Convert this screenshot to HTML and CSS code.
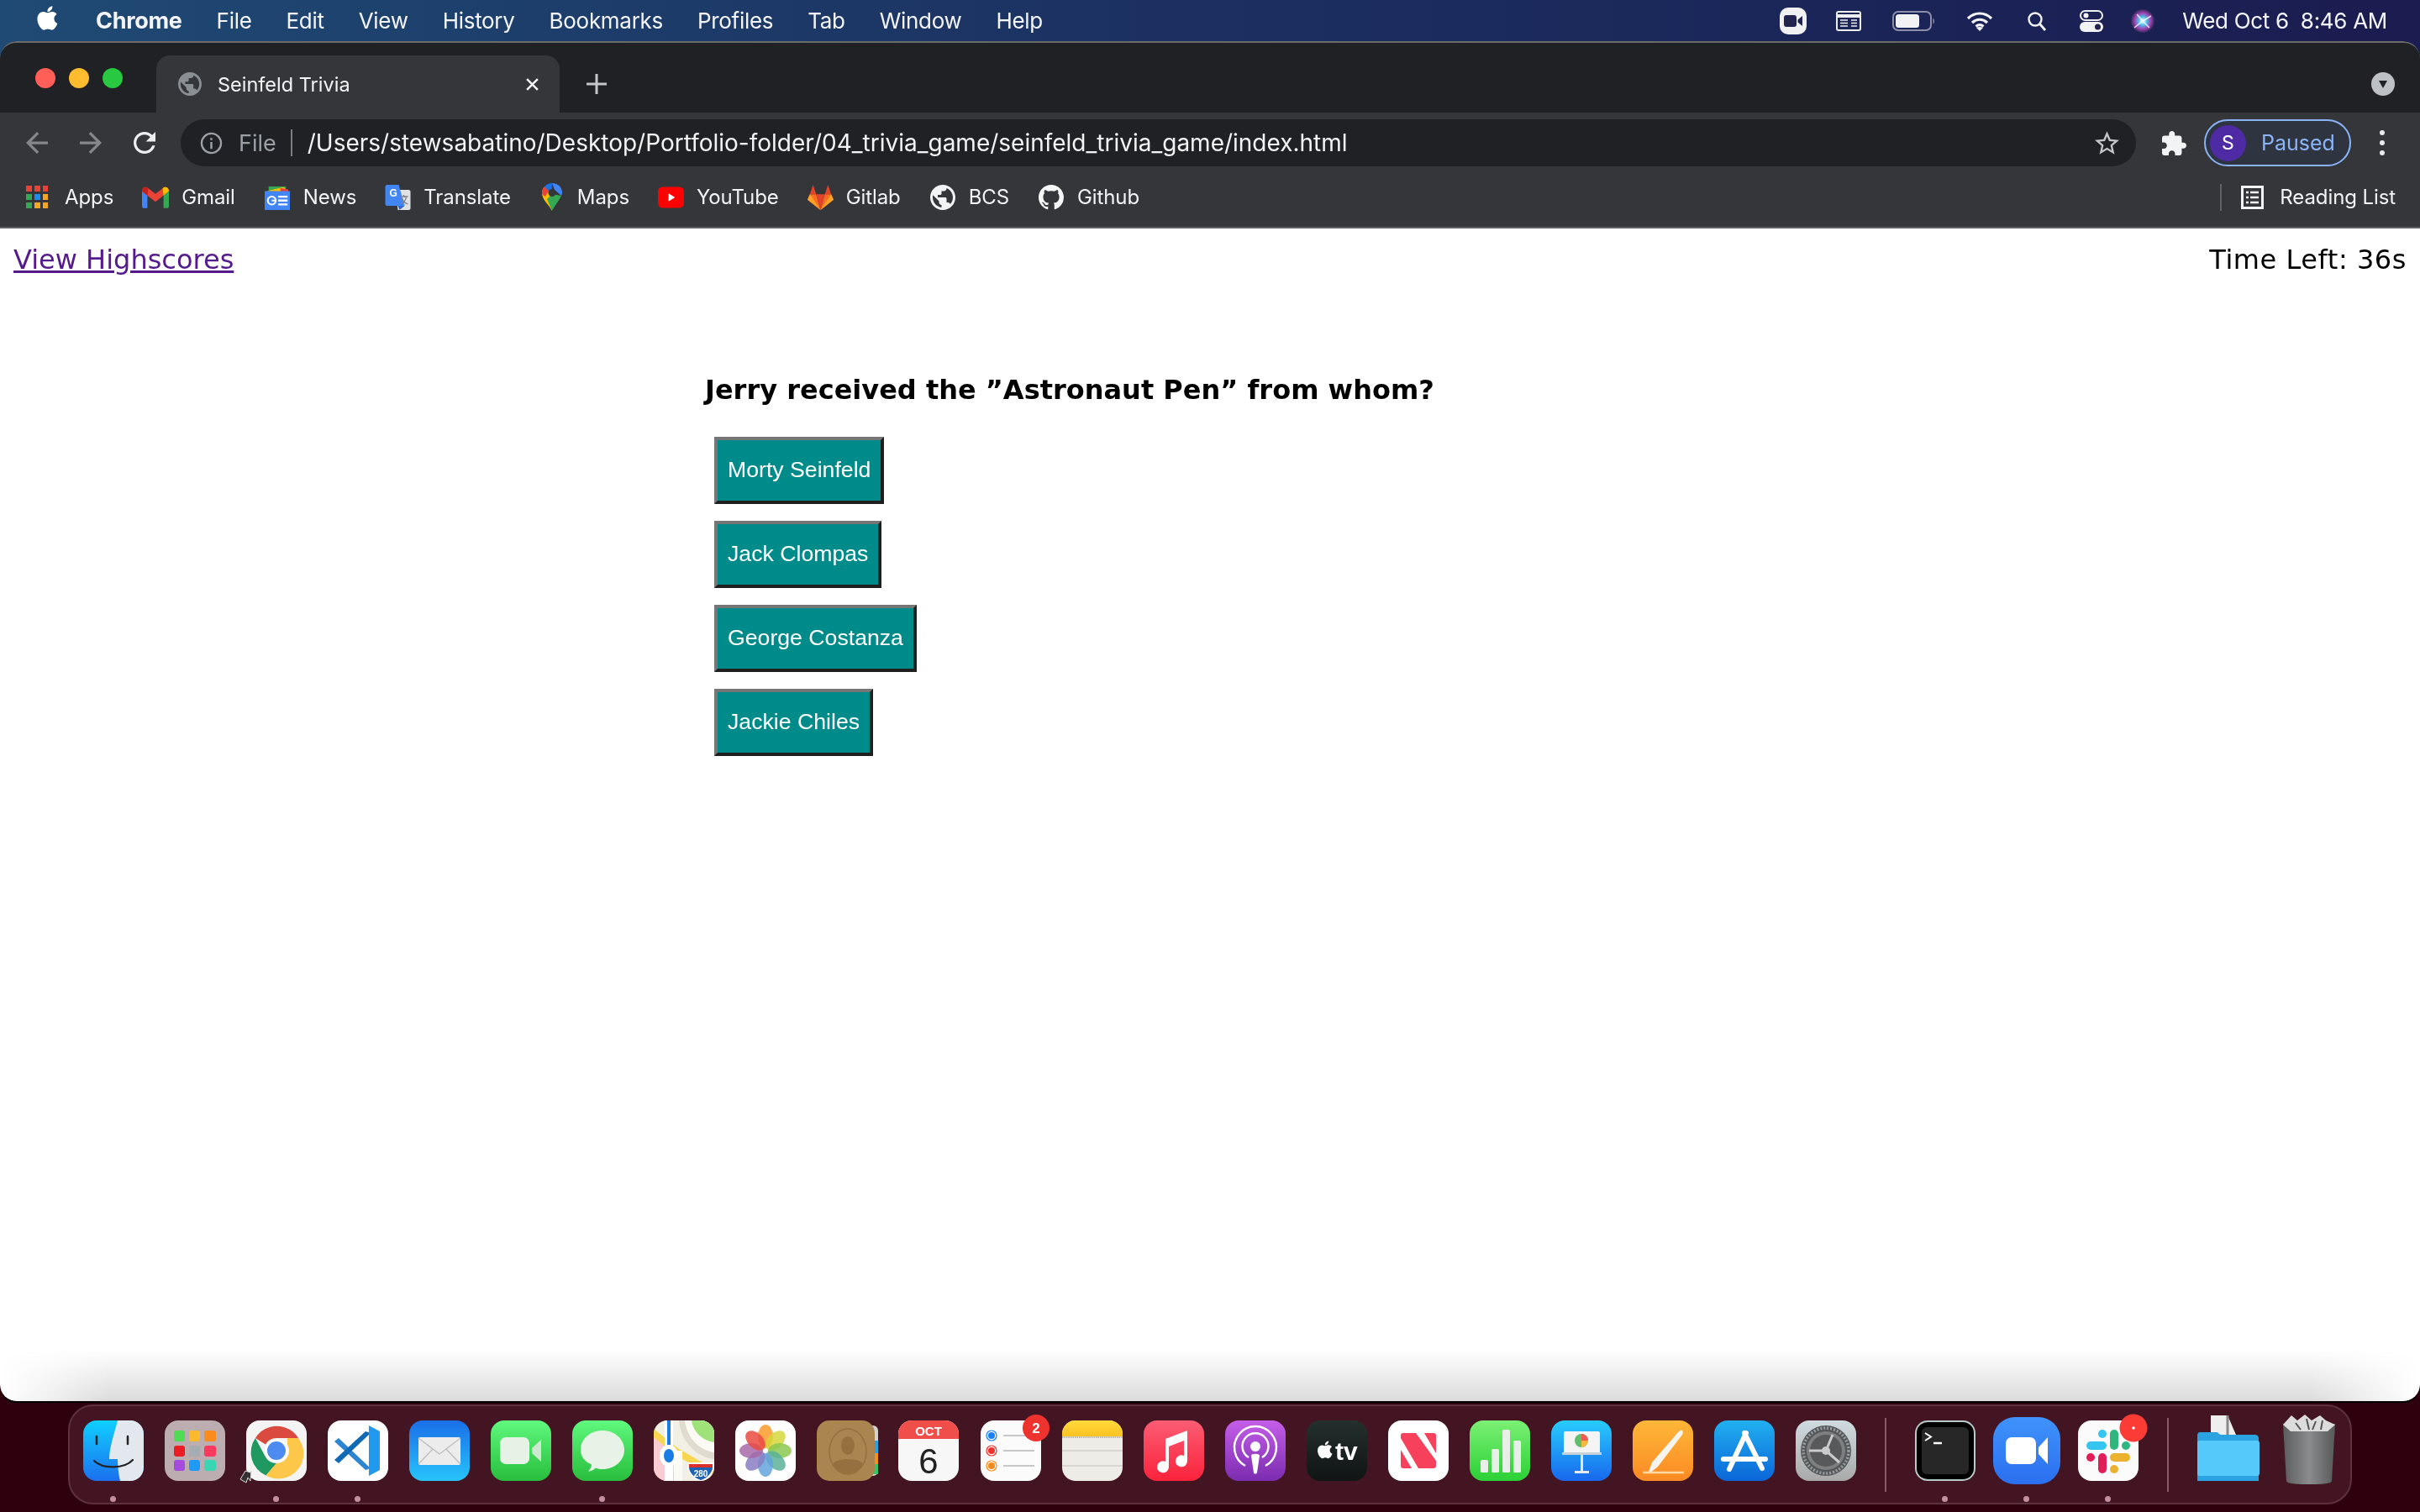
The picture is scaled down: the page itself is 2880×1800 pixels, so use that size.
FILE: index.html
```html
<!DOCTYPE html>
<html lang="en">
<head>
<meta charset="utf-8">
<title>Seinfeld Trivia</title>
<link rel="stylesheet" href="styles.css">
</head>
<body class="screen">
<header class="menubar">
  <div class="menu-left">
    <svg class="apple" viewBox="3.5 3 16.5 18" aria-hidden="true"><path fill="#fff" d="M17.05 20.28c-.98.95-2.05.8-3.08.35-1.09-.46-2.09-.48-3.24 0-1.44.62-2.2.44-3.06-.35C2.79 15.25 3.51 7.59 9.05 7.31c1.35.07 2.29.74 3.08.8 1.18-.24 2.31-.93 3.57-.84 1.51.12 2.65.72 3.4 1.8-3.12 1.87-2.38 5.98.48 7.13-.57 1.5-1.31 2.99-2.54 4.09zM12.03 7.25c-.15-2.23 1.66-4.07 3.74-4.25.29 2.58-2.34 4.5-3.74 4.25z"/></svg>
    <span class="menu-app">Chrome</span><span>File</span><span>Edit</span><span>View</span><span>History</span><span>Bookmarks</span><span>Profiles</span><span>Tab</span><span>Window</span><span>Help</span>
  </div>
  <div class="menu-right">
    <svg class="st st-zoom" viewBox="0 0 32 32"><rect width="32" height="32" rx="10" fill="#f1f1f4"/><rect x="5" y="9" width="15" height="14" rx="3" fill="#23234f"/><path d="M21.5 14.5 27 10v12l-5.500-4.500z" fill="#23234f"/></svg>
    <svg class="st st-next" viewBox="0 0 30 24"><rect x="1" y="1" width="28" height="22" rx="2" fill="none" stroke="#eee" stroke-width="2"/><path d="M1 6h28" stroke="#eee" stroke-width="4"/><path d="M5 11h9M5 14.500h9M5 18h9M18 11h7M18 14.500h7M18 18h7" stroke="#eee" stroke-width="1.600"/></svg>
    <svg class="st st-batt" viewBox="0 0 52 24"><rect x="1" y="1" width="45" height="22" rx="6" fill="none" stroke="#8d8fa8" stroke-width="2"/><rect x="4" y="4" width="28" height="16" rx="3.500" fill="#f2f2f4"/><path d="M48.500 8.500c2 1 2 6 0 7z" fill="#8d8fa8"/></svg>
    <svg class="st st-wifi" viewBox="0 0 32 24"><path d="M2 9C10 1 22 1 30 9M7 14c5.500-5 12.500-5 18 0M11.500 18.500c3-2.500 6-2.500 9 0" fill="none" stroke="#f2f2f4" stroke-width="3.200"/><path d="M16 24l-4-4c2.500-1.500 5.500-1.500 8 0z" fill="#f2f2f4"/></svg>
    <svg class="st st-search" viewBox="0 0 24 24"><circle cx="10" cy="10" r="7.500" fill="none" stroke="#f2f2f4" stroke-width="2.400"/><path d="M15.500 15.500 22 23" stroke="#f2f2f4" stroke-width="2.800"/></svg>
    <svg class="st st-ctrl" viewBox="0 0 28 26"><rect x="1" y="1" width="26" height="11" rx="5.500" fill="none" stroke="#f2f2f4" stroke-width="2"/><circle cx="7.500" cy="6.500" r="3" fill="#f2f2f4"/><rect y="14" width="28" height="12" rx="6" fill="#f2f2f4"/><circle cx="21.500" cy="20" r="3.500" fill="#23234f"/></svg>
    <svg class="st st-siri" viewBox="0 0 28 28"><defs><radialGradient id="siri"><stop offset="0" stop-color="#fff"/><stop offset=".35" stop-color="#4fc0e8"/><stop offset=".7" stop-color="#a03fb0"/><stop offset="1" stop-color="#2b2a55"/></radialGradient></defs><circle cx="14" cy="14" r="14" fill="url(#siri)"/><path d="M14 14 24 8M14 14 4 22M14 14 22 22M14 14 7 6" stroke="#fff" stroke-width="1.500" opacity=".8"/></svg>
    <span class="clock">Wed Oct 6&nbsp; 8:46 AM</span>
  </div>
</header>

<main class="window">
  <div class="tabstrip">
    <div class="lights"><i class="light red"></i><i class="light yellow"></i><i class="light green"></i></div>
    <div class="tab">
      <svg class="tab-globe" viewBox="2 2 20 20"><path fill="#8a8f94" d="M12 2C6.480 2 2 6.480 2 12s4.480 10 10 10 10-4.480 10-10S17.520 2 12 2zm-1 17.930c-3.950-.490-7-3.850-7-7.930 0-.620.080-1.210.210-1.790L9 15v1c0 1.100.900 2 2 2v1.930zm6.900-2.540c-.260-.810-1-1.390-1.900-1.390h-1v-3c0-.550-.450-1-1-1H8v-2h2c.550 0 1-.450 1-1V7h2c1.100 0 2-.900 2-2v-.410c2.930 1.190 5 4.060 5 7.410 0 2.080-.800 3.970-2.100 5.390z"/></svg>
      <span class="tab-title">Seinfeld Trivia</span>
      <svg class="tab-close" viewBox="0 0 16 16"><path d="M2 2l12 12M14 2 2 14" stroke="#f1f3f4" stroke-width="2.400"/></svg>
    </div>
    <svg class="new-tab" viewBox="0 0 24 24"><path d="M12 0v24M0 12h24" stroke="#c4c7c9" stroke-width="3"/></svg>
    <div class="strip-spacer"></div>
    <div class="tab-search"><svg viewBox="0 0 12 12"><path d="M1 2h10L6 11z" fill="#202124"/></svg></div>
  </div>

  <div class="toolbar">
    <svg class="nav nav-back" viewBox="4 4 16 16"><path fill="#85878a" d="M20 11H7.830l5.590-5.590L12 4l-8 8 8 8 1.410-1.410L7.830 13H20v-2z"/></svg>
    <svg class="nav nav-fwd" viewBox="4 4 16 16"><path fill="#85878a" d="M4 11h12.170l-5.590-5.590L12 4l8 8-8 8-1.410-1.410L16.170 13H4v-2z"/></svg>
    <svg class="nav nav-reload" viewBox="4 4 16 16"><path fill="#eceef0" d="M17.650 6.350C16.200 4.900 14.210 4 12 4c-4.420 0-7.990 3.580-7.990 8s3.570 8 7.990 8c3.730 0 6.840-2.550 7.730-6h-2.080c-.820 2.330-3.040 4-5.650 4-3.310 0-6-2.690-6-6s2.690-6 6-6c1.660 0 3.140.690 4.220 1.780L13 11h7V4l-2.350 2.350z"/></svg>
    <div class="omnibox">
      <svg class="info" viewBox="0 0 28 28"><circle cx="14" cy="14" r="12" fill="none" stroke="#9aa0a6" stroke-width="2.400"/><path d="M12.700 12.500h2.600V21h-2.600zM12.700 7.500h2.600v2.600h-2.600z" fill="#9aa0a6"/></svg>
      <span class="omni-file">File</span>
      <i class="omni-sep"></i>
      <span class="omni-url">/Users/stewsabatino/Desktop/Portfolio-folder/04_trivia_game/seinfeld_trivia_game/index.html</span>
      <svg class="star" viewBox="2 2 20 19"><path fill="#c4c7c9" d="M22 9.240l-7.190-.620L12 2 9.190 8.630 2 9.240l5.460 4.730L5.820 21 12 17.270 18.180 21l-1.630-7.030L22 9.240zM12 15.400l-3.760 2.270 1-4.280-3.320-2.880 4.380-.380L12 6.100l1.710 4.040 4.380.380-3.320 2.880 1 4.280L12 15.400z"/></svg>
    </div>
    <svg class="puzzle" viewBox="2 1 21 21"><path fill="#f1f3f4" d="M20.500 11H19V7c0-1.100-.900-2-2-2h-4V3.500C13 2.120 11.880 1 10.500 1S8 2.120 8 3.500V5H4c-1.100 0-1.990.900-1.990 2v3.800H3.500c1.490 0 2.700 1.210 2.700 2.700s-1.210 2.700-2.700 2.700H2V20c0 1.100.900 2 2 2h3.800v-1.500c0-1.490 1.210-2.700 2.700-2.700 1.490 0 2.700 1.210 2.700 2.700V22H17c1.100 0 2-.900 2-2v-4h1.500c1.380 0 2.500-1.120 2.500-2.500S21.880 11 20.500 11z"/></svg>
    <div class="profile"><span class="avatar">S</span><span class="paused">Paused</span></div>
    <div class="kebab"><i></i><i></i><i></i></div>
  </div>

  <nav class="bookmarks">
    <a class="bm bm-apps"><svg class="bm-ic" viewBox="0 0 26 27"><g fill="#ea4335"><rect width="7" height="7"/><rect x="10" width="7" height="7"/><rect x="20" width="6" height="7"/></g><rect y="10" width="7" height="7" fill="#34a853"/><rect x="10" y="10" width="7" height="7" fill="#1a8cf0"/><rect x="20" y="10" width="6" height="7" fill="#f5a623"/><rect y="20" width="7" height="7" fill="#34a853"/><rect x="10" y="20" width="7" height="7" fill="#f5a623"/><rect x="20" y="20" width="6" height="7" fill="#f5a623"/></svg><span>Apps</span></a>
    <a class="bm"><svg class="bm-ic" viewBox="0 0 30 24"><path d="M0 5v17c0 1 1 2 2 2h4V10z" fill="#4285f4"/><path d="M24 10v14h4c1 0 2-1 2-2V5z" fill="#34a853"/><path d="M0 5c0-4 4-6 7-3l8 6 8-6c3-3 7-1 7 3l-6 5-9 7-9-7z" fill="#ea4335"/><path d="M0 5c0-4 4-6 7-3l-1 8z" fill="#c5221f"/><path d="M30 5c0-4-4-6-7-3l1 8z" fill="#fbbc04"/></svg><span>Gmail</span></a>
    <a class="bm"><svg class="bm-ic" viewBox="0 0 32 32"><path d="M5 2h22v6H5z" fill="#34a853"/><path d="M2 8 24 3l6 6z" fill="#fbbc04"/><path d="M20 4l10 2v4H20z" fill="#ea4335"/><rect y="8" width="32" height="24" fill="#4285f4"/><circle cx="9" cy="20" r="5" fill="none" stroke="#fff" stroke-width="2.200"/><path d="M9 20h5" stroke="#fff" stroke-width="2"/><path d="M17 15h12M17 20h12M17 25h12" stroke="#fff" stroke-width="2.500"/></svg><span>News</span></a>
    <a class="bm bm-tight"><svg class="bm-ic" viewBox="0 0 30 30"><path d="M12 6h16c1 0 2 1 2 2v20c0 1-1 2-2 2H15z" fill="#dfe1e3"/><path d="M2 0h14l7 25H2c-1 0-2-1-2-2V2c0-1 1-2 2-2z" fill="#4285f4"/><path d="M15 25h8l-6 5z" fill="#3367d6"/><text class="tr-g" x="5" y="14">G</text><path d="M18 14h9M22 12v2M25 14c-1 6-4 8-6 9M20 16c1 4 4 6 7 7" fill="none" stroke="#7d8084" stroke-width="1.300"/></svg><span>Translate</span></a>
    <a class="bm bm-narrow"><svg class="bm-ic bm-pin" viewBox="0 0 24 33"><path d="M12 33C8 25 0 20 0 11.500 0 9 1 6.500 3 4.500l9 9z" fill="#fbbc04"/><path d="M12 33c1-3 9-13 11-18L12 13 6 19z" fill="#34a853"/><path d="M3 4.500C5 1.500 8 0 12 0l-.500 9-3 2z" fill="#1a73e8"/><path d="M0 11.500C0 9 1 6.500 3 4.500L8 9 4 16C1 14 0 13 0 11.500z" fill="#ea4335"/><path d="M12 0c7 0 12 5 12 11.500 0 1-.500 2.500-1 3.500L15 8z" fill="#4285f4"/><circle cx="12" cy="11.500" r="4.500" fill="#35363a"/></svg><span>Maps</span></a>
    <a class="bm bm-tight"><svg class="bm-ic" viewBox="0 0 32 26"><rect width="32" height="26" rx="6" fill="#f00"/><path d="M13 8v10l8-5z" fill="#fff"/></svg><span>YouTube</span></a>
    <a class="bm bm-tight"><svg class="bm-ic" viewBox="0 0 33 32"><path d="M16.500 32 0 19l3-7h8z" fill="#fc6d26"/><path d="M16.500 32 33 19l-3-7h-8z" fill="#fc6d26"/><path d="M16.500 32 11 12h11z" fill="#e24329"/><path d="M0 19l16.500 13L3 12z" fill="#fca326"/><path d="M33 19 16.500 32 30 12z" fill="#fca326"/><path d="M3 12 7 0l4 12zM22 12l4-12 4 12z" fill="#e24329"/></svg><span>Gitlab</span></a>
    <a class="bm"><svg class="bm-ic bm-globe" viewBox="2 2 20 20"><path fill="#f1f3f4" d="M12 2C6.480 2 2 6.480 2 12s4.480 10 10 10 10-4.480 10-10S17.520 2 12 2zm-1 17.930c-3.950-.490-7-3.850-7-7.930 0-.620.080-1.210.210-1.790L9 15v1c0 1.100.900 2 2 2v1.930zm6.900-2.540c-.260-.810-1-1.390-1.900-1.390h-1v-3c0-.550-.450-1-1-1H8v-2h2c.550 0 1-.450 1-1V7h2c1.100 0 2-.900 2-2v-.410c2.930 1.190 5 4.060 5 7.410 0 2.080-.800 3.970-2.100 5.390z"/></svg><span>BCS</span></a>
    <a class="bm"><svg class="bm-ic" viewBox="0 0 16 16"><path fill="#f5f5f5" d="M8 0C3.580 0 0 3.580 0 8c0 3.540 2.290 6.530 5.470 7.590.4.070.55-.17.55-.38 0-.19-.01-.82-.01-1.490-2.010.37-2.530-.49-2.690-.94-.09-.23-.48-.94-.82-1.130-.28-.15-.68-.52-.01-.53.63-.01 1.080.58 1.230.82.72 1.210 1.870.87 2.330.66.07-.52.28-.87.51-1.070-1.780-.2-3.640-.89-3.640-3.950 0-.87.31-1.590.82-2.150-.08-.2-.36-1.020.08-2.120 0 0 .67-.21 2.200.82.64-.18 1.320-.27 2-.27.68 0 1.360.09 2 .27 1.530-1.040 2.200-.82 2.200-.82.44 1.100.16 1.920.08 2.120.51.56.82 1.270.82 2.150 0 3.070-1.870 3.750-3.650 3.950.29.25.54.73.54 1.480 0 1.070-.01 1.930-.01 2.200 0 .21.15.46.55.38A8.013 8.013 0 0016 8c0-4.420-3.580-8-8-8z"/></svg><span>Github</span></a>
    <div class="bm-spacer"></div>
    <i class="bm-sep"></i>
    <a class="bm bm-read"><svg class="read-ic" viewBox="0 0 27 28"><rect x="1.500" y="1.500" width="24" height="25" fill="none" stroke="#f1f3f4" stroke-width="3"/><path d="M6 8h3M6 14h3M6 20h3M11 8h10M11 14h10M11 20h10" stroke="#f1f3f4" stroke-width="2.400"/></svg><span>Reading List</span></a>
  </nav>

  <section class="page">
    <div class="topline">
      <a class="scores" href="#">View Highscores</a>
      <span class="timer">Time Left: 36s</span>
    </div>
    <div class="quiz">
      <h3 class="question">Jerry received the ”Astronaut Pen” from whom?</h3>
      <div class="answers">
        <button class="answer">Morty Seinfeld</button>
        <button class="answer">Jack Clompas</button>
        <button class="answer">George Costanza</button>
        <button class="answer">Jackie Chiles</button>
      </div>
    </div>
  </section>
</main>

<footer class="dock-row">
<div class="dock">
  <div class="cell"><svg class="di" viewBox="0 0 72 72"><defs><linearGradient id="fb" x1="0" y1="0" x2="0" y2="1"><stop offset="0" stop-color="#0fd0ff"/><stop offset="1" stop-color="#1b70ee"/></linearGradient></defs><rect width="72" height="72" rx="16" fill="url(#fb)"/><path d="M41 0h15c9 0 16 7 16 16v40c0 9-7 16-16 16H44c-2-8-3-18-3-26H31c0-14 6-30 10-46z" fill="#e3e8ee"/><path d="M16 19v9M53 19v9" stroke="#222" stroke-width="2.500" stroke-linecap="round"/><path d="M13 48c10 10 36 10 46-1" fill="none" stroke="#222" stroke-width="2.200" stroke-linecap="round"/></svg><i class="dot"></i></div>
  <div class="cell"><svg class="di" viewBox="0 0 72 72"><rect width="72" height="72" rx="16" fill="#bcaeb0"/><rect x="11" y="12" width="13" height="13" rx="3" fill="#4fdc52"/><rect x="29" y="12" width="13" height="13" rx="3" fill="#fdb92c"/><rect x="47" y="12" width="14" height="13" rx="3" fill="#fa8c1c"/><rect x="11" y="30" width="13" height="13" rx="3" fill="#ec1c24"/><rect x="29" y="30" width="13" height="13" rx="3" fill="#a5acb2"/><rect x="47" y="30" width="14" height="13" rx="3" fill="#fb3a5e"/><rect x="11" y="47" width="13" height="13" rx="3" fill="#a54be0"/><rect x="29" y="47" width="13" height="13" rx="3" fill="#1e9bf8"/><rect x="47" y="47" width="14" height="13" rx="3" fill="#3ad6b4"/></svg></div>
  <div class="cell"><svg class="di" viewBox="0 0 72 72"><rect width="72" height="72" rx="16" fill="#f4f4f4"/><path d="M10.900 21A30 30 0 0 1 62 21H36a15 15 0 0 0-13 7.500z" fill="#db4a3f"/><path d="M10.900 21 23 43.500A15 15 0 0 0 36 51L23.500 65.500A30 30 0 0 1 10.900 21z" fill="#1f9960"/><path d="M62 21A30 30 0 0 1 23.500 65.500L36 51a15 15 0 0 0 13-22.500V21z" fill="#fdc84a"/><circle cx="36" cy="36" r="14" fill="#fff"/><circle cx="36" cy="36" r="11" fill="#4d8bf0"/><path d="M-7 70l6-10 6 2 1-2-1 12-3-4-2 6z" fill="#333" stroke="#ddd" stroke-width="1"/></svg><i class="dot"></i></div>
  <div class="cell"><svg class="di" viewBox="0 0 72 72"><rect width="72" height="72" rx="16" fill="#fff"/><path d="M8 25l5-4 38 36-6 2z" fill="#2c85d0"/><path d="M8 47l5 4 38-36-6-2z" fill="#0f69b4"/><path d="M49 6 62 13v46l-13 7z" fill="#2099ef"/></svg><i class="dot"></i></div>
  <div class="cell"><svg class="di" viewBox="0 0 72 72"><defs><linearGradient id="mb" x1="0" y1="0" x2="0" y2="1"><stop offset="0" stop-color="#1a6fe8"/><stop offset="1" stop-color="#27c4fb"/></linearGradient></defs><rect width="72" height="72" rx="16" fill="url(#mb)"/><rect x="11" y="20" width="50" height="33" rx="2" fill="#ececec"/><path d="M11 21 36 40 61 21M11 52 28 34M61 52 44 34" fill="none" stroke="#bdbdbd" stroke-width="1.300"/></svg></div>
  <div class="cell"><svg class="di" viewBox="0 0 72 72"><defs><linearGradient id="fc" x1="0" y1="0" x2="0" y2="1"><stop offset="0" stop-color="#5ff97e"/><stop offset="1" stop-color="#28bd3c"/></linearGradient></defs><rect width="72" height="72" rx="16" fill="url(#fc)"/><rect x="11" y="20" width="35" height="32" rx="7" fill="#e6f2e6"/><path d="M49 33 60 23v26L49 39z" fill="#cfe6d0"/></svg></div>
  <div class="cell"><svg class="di" viewBox="0 0 72 72"><rect width="72" height="72" rx="16" fill="url(#fc)"/><path d="M36 12c14.500 0 26 10 26 23S50.500 58 36 58c-3 0-5.500-.500-8-1.500-2 2-5 4-9 4 2-2 4-5 4-8C15 49 10 43 10 35c0-13 11.500-23 26-23z" fill="#e8f3e8"/></svg><i class="dot"></i></div>
  <div class="cell"><svg class="di" viewBox="0 0 72 72"><defs><clipPath id="mc"><rect width="72" height="72" rx="16"/></clipPath></defs><g clip-path="url(#mc)"><rect width="72" height="72" fill="#f2efe4"/><path d="M30 0H72V46C50 44 32 24 30 0z" fill="#dfdbcf"/><path d="M37 0H72V38C54 36 39 20 37 0z" fill="#fbfaf5"/><path d="M45 0H72V26C58 24 47 14 45 0z" fill="#9fe27a"/><path d="M0 14 26 36V72H0z" fill="#f9ccd3"/><path d="M0 10 30 34 72 58V66L30 44 0 20z" fill="#f8d64e"/><rect x="24" y="36" width="10" height="36" fill="#fbfaf5"/><rect x="13" y="0" width="10" height="72" fill="#fff"/><rect x="16" y="0" width="4" height="35" fill="#1a7de4"/><ellipse cx="18" cy="42" rx="11" ry="13" fill="#fff"/><ellipse cx="18" cy="42" rx="6" ry="8" fill="#1a7de4"/><path d="M40 50h32v4c0 8-8 16-16 18-8-2-16-10-16-18z" fill="#fff"/><path d="M42 52h28v4H42z" fill="#d9302a"/><path d="M42 56h28c0 6-7 13-14 15-7-2-14-9-14-15z" fill="#1d62b4"/><text class="mp-280" x="56" y="67">280</text></g></svg></div>
  <div class="cell"><svg class="di" viewBox="0 0 72 72"><rect width="72" height="72" rx="16" fill="#fff"/><g style="mix-blend-mode:multiply"><ellipse cx="36" cy="19" rx="9" ry="14" fill="#fc9a2c" opacity=".85"/><ellipse cx="36" cy="19" rx="9" ry="14" fill="#d6d73c" opacity=".85" transform="rotate(45 36 36)"/><ellipse cx="36" cy="19" rx="9" ry="14" fill="#8cc850" opacity=".85" transform="rotate(90 36 36)"/><ellipse cx="36" cy="19" rx="9" ry="14" fill="#5bb29a" opacity=".85" transform="rotate(135 36 36)"/><ellipse cx="36" cy="19" rx="9" ry="14" fill="#63a5dc" opacity=".85" transform="rotate(180 36 36)"/><ellipse cx="36" cy="19" rx="9" ry="14" fill="#8a7fc4" opacity=".85" transform="rotate(225 36 36)"/><ellipse cx="36" cy="19" rx="9" ry="14" fill="#a76aa8" opacity=".85" transform="rotate(270 36 36)"/><ellipse cx="36" cy="19" rx="9" ry="14" fill="#ea4b42" opacity=".85" transform="rotate(315 36 36)"/></g></svg></div>
  <div class="cell"><svg class="di" viewBox="0 0 72 72"><rect x="60" y="6" width="13" height="60" rx="6" fill="#d2d2d2"/><rect x="66" y="24" width="7" height="15" fill="#2aa3e6"/><rect x="66" y="39" width="7" height="13" fill="#f58f1e"/><rect x="66" y="52" width="7" height="12" fill="#35c566"/><rect width="69" height="72" rx="15" fill="#ab8550"/><ellipse cx="37" cy="37" rx="22" ry="27" fill="none" stroke="#95713f" stroke-width="1.500"/><ellipse cx="37" cy="30" rx="8" ry="11" fill="#95713f"/><path d="M19 52c4-8 32-8 36 0-5 8-12 12-18 12S24 60 19 52z" fill="#95713f"/></svg></div>
  <div class="cell"><svg class="di" viewBox="0 0 72 72"><defs><clipPath id="cc"><rect width="72" height="72" rx="16"/></clipPath></defs><g clip-path="url(#cc)"><rect width="72" height="72" fill="#f7f7f7"/><rect width="72" height="22" fill="#f04e4a"/></g><text class="cal-mon" x="36" y="18">OCT</text><text class="cal-day" x="36" y="63">6</text></svg></div>
  <div class="cell"><svg class="di" viewBox="0 0 72 72"><rect width="72" height="72" rx="16" fill="#fbfbfb"/><circle cx="13" cy="18" r="6" fill="none" stroke="#1a7ff0" stroke-width="1.200"/><circle cx="13" cy="18" r="4" fill="#1a7ff0"/><circle cx="13" cy="36" r="6" fill="none" stroke="#f0322a" stroke-width="1.200"/><circle cx="13" cy="36" r="4" fill="#f0322a"/><circle cx="13" cy="54" r="6" fill="none" stroke="#f58a1a" stroke-width="1.200"/><circle cx="13" cy="54" r="4" fill="#f58a1a"/><path d="M27 18h37M27 36h37M27 54h37" stroke="#c8c8c8" stroke-width="2"/><circle cx="66" cy="9" r="16" fill="#ee332e"/><text class="badge-num" x="66" y="15">2</text></svg></div>
  <div class="cell"><svg class="di" viewBox="0 0 72 72"><defs><clipPath id="nc"><rect width="72" height="72" rx="16"/></clipPath><linearGradient id="ny" x1="0" y1="0" x2="0" y2="1"><stop offset="0" stop-color="#ffd93a"/><stop offset="1" stop-color="#fdc223"/></linearGradient></defs><g clip-path="url(#nc)"><rect width="72" height="72" fill="#eeece6"/><rect width="72" height="19" fill="url(#ny)"/><path d="M0 20h72" stroke="#b9b6ab" stroke-width="2" stroke-dasharray="1.500 1"/><path d="M0 36h72M0 54h72" stroke="#d2d0c9" stroke-width="1.500"/></g></svg></div>
  <div class="cell"><svg class="di" viewBox="0 0 72 72"><defs><linearGradient id="mu" x1="0" y1="0" x2="0" y2="1"><stop offset="0" stop-color="#fb5c74"/><stop offset="1" stop-color="#fa233b"/></linearGradient></defs><rect width="72" height="72" rx="16" fill="url(#mu)"/><path d="M26 22 52 12v36a7 7 0 1 1-4-6V24l-18 7v24a7 7 0 1 1-4-6z" fill="#fff"/></svg></div>
  <div class="cell"><svg class="di" viewBox="0 0 72 72"><defs><linearGradient id="po" x1="0" y1="0" x2="0" y2="1"><stop offset="0" stop-color="#c55ee8"/><stop offset="1" stop-color="#7b2cb0"/></linearGradient></defs><rect width="72" height="72" rx="16" fill="url(#po)"/><path d="M24 54a25 25 0 1 1 24 0M28 44a15.500 15.500 0 1 1 16 0" fill="none" stroke="#fff" stroke-width="2.400"/><circle cx="36" cy="31" r="6" fill="#fff"/><path d="M31 42c0-3 10-3 10 0l-3 20c-.500 2-3.500 2-4 0z" fill="#fff"/></svg></div>
  <div class="cell"><svg class="di" viewBox="0 0 72 72"><defs><linearGradient id="tv" x1="0" y1="0" x2="0" y2="1"><stop offset="0" stop-color="#24302e"/><stop offset="1" stop-color="#101414"/></linearGradient></defs><rect width="72" height="72" rx="16" fill="url(#tv)"/><g transform="translate(8 21) scale(1.150)"><path fill="#fff" d="M17.050 20.280c-.980.950-2.050.800-3.080.350-1.090-.460-2.090-.480-3.240 0-1.440.620-2.200.440-3.060-.350C2.790 15.250 3.510 7.590 9.050 7.310c1.350.070 2.290.740 3.080.800 1.180-.240 2.310-.930 3.570-.840 1.510.120 2.650.720 3.400 1.800-3.120 1.870-2.380 5.980.480 7.130-.570 1.500-1.310 2.990-2.540 4.090zM12.030 7.250c-.150-2.230 1.660-4.070 3.740-4.250.290 2.580-2.340 4.500-3.740 4.250z"/></g><text class="tv-txt" x="34" y="47">tv</text></svg></div>
  <div class="cell"><svg class="di" viewBox="0 0 72 72"><rect width="72" height="72" rx="16" fill="#fff"/><rect x="15" y="15" width="42" height="42" rx="3" fill="#f7405c"/><path d="M15 21 36 57H28L15 35zM33 15h10l14 24v9z" fill="#fff"/></svg></div>
  <div class="cell"><svg class="di" viewBox="0 0 72 72"><defs><linearGradient id="nu" x1="0" y1="0" x2="0" y2="1"><stop offset="0" stop-color="#7bf074"/><stop offset="1" stop-color="#2bd036"/></linearGradient></defs><rect width="72" height="72" rx="16" fill="url(#nu)"/><rect x="13" y="47" width="9" height="15" rx="1.500" fill="#e8efe8"/><rect x="26" y="34" width="9" height="28" rx="1.500" fill="#e8efe8"/><rect x="39" y="11" width="9" height="51" rx="1.500" fill="#e8efe8"/><rect x="52" y="24" width="9" height="38" rx="1.500" fill="#e8efe8"/></svg></div>
  <div class="cell"><svg class="di" viewBox="0 0 72 72"><defs><linearGradient id="ke" x1="0" y1="0" x2="0" y2="1"><stop offset="0" stop-color="#27ccfc"/><stop offset="1" stop-color="#1868ee"/></linearGradient></defs><rect width="72" height="72" rx="16" fill="url(#ke)"/><rect x="15" y="13" width="43" height="28" rx="2" fill="#f4f4f4"/><circle cx="36" cy="24" r="8" fill="#62bd6c"/><path d="M36 24V16a8 8 0 0 1 8 8z" fill="#ef5b4e"/><path d="M36 24h8a8 8 0 0 1-8 8z" fill="#f5b93d"/><rect x="13" y="38" width="47" height="3" fill="#c8d0d8"/><path d="M35 41h3v19h-3z" fill="#e6eaee"/><path d="M28 60h17v3H28z" fill="#e6eaee"/></svg></div>
  <div class="cell"><svg class="di" viewBox="0 0 72 72"><defs><linearGradient id="pa" x1="0" y1="0" x2="0" y2="1"><stop offset="0" stop-color="#fdb738"/><stop offset="1" stop-color="#fb8a24"/></linearGradient></defs><rect width="72" height="72" rx="16" fill="url(#pa)"/><path d="M55 13c4-3 6 0 4 4L30 55l-10 8-1-2 4-11z" fill="#f7f4ee"/><path d="M12 62h49" stroke="#ffd9a0" stroke-width="2.500"/></svg></div>
  <div class="cell"><svg class="di" viewBox="0 0 72 72"><defs><linearGradient id="ap" x1="0" y1="0" x2="0" y2="1"><stop offset="0" stop-color="#21b0f0"/><stop offset="1" stop-color="#0b66d8"/></linearGradient></defs><rect width="72" height="72" rx="16" fill="url(#ap)"/><path d="M38 15 18 58M36 15 57 57M11 46h50" stroke="#fff" stroke-width="6" stroke-linecap="round"/></svg></div>
  <div class="cell"><svg class="di" viewBox="0 0 72 72"><defs><linearGradient id="se" x1="0" y1="0" x2="0" y2="1"><stop offset="0" stop-color="#cfdbe0"/><stop offset="1" stop-color="#a9a9a9"/></linearGradient></defs><rect width="72" height="72" rx="16" fill="url(#se)"/><circle cx="36" cy="36" r="30" fill="#55585a"/><circle cx="36" cy="36" r="27" fill="none" stroke="#9a9d9f" stroke-width="3.500" stroke-dasharray="2 2"/><circle cx="36" cy="36" r="23" fill="#7d7f81"/><circle cx="36" cy="36" r="19" fill="#58595b"/><path d="M36 36 44 17M36 36 16 36M36 36 52 50" stroke="#c9cbcc" stroke-width="3"/><circle cx="36" cy="36" r="5" fill="#c9cbcc"/></svg></div>
  <i class="dock-sep"></i>
  <div class="cell"><svg class="di" viewBox="0 0 72 72"><rect width="72" height="72" rx="15" fill="#b8c9c9"/><rect x="2" y="2" width="68" height="68" rx="13" fill="#000"/><rect x="8" y="8" width="56" height="56" rx="6" fill="#272727"/><path d="M12 15l7 4.500L12 24" fill="none" stroke="#fff" stroke-width="2"/><path d="M22 27h10" stroke="#fff" stroke-width="2.500"/></svg><i class="dot"></i></div>
  <div class="cell"><svg class="di" viewBox="0 0 72 72"><defs><linearGradient id="zo" x1="0" y1="0" x2="0" y2="1"><stop offset="0" stop-color="#3f93fb"/><stop offset="1" stop-color="#2b6ff0"/></linearGradient></defs><rect x="-4" y="-4" width="80" height="80" rx="26" fill="url(#zo)"/><rect x="11" y="20" width="36" height="32" rx="7" fill="#fff"/><path d="M50 32 61 20v32L50 40z" fill="#fff"/></svg><i class="dot"></i></div>
  <div class="cell"><svg class="di" viewBox="0 0 72 72"><rect width="72" height="72" rx="16" fill="#fbfbfb"/><rect x="10" y="25" width="24" height="10" rx="5" fill="#36c5f0"/><rect x="24" y="11" width="10" height="10" rx="5" fill="#36c5f0"/><rect x="38" y="11" width="10" height="24" rx="5" fill="#2eb67d"/><rect x="52" y="25" width="10" height="10" rx="5" fill="#2eb67d"/><rect x="38" y="39" width="24" height="10" rx="5" fill="#ecb22e"/><rect x="38" y="53" width="10" height="10" rx="5" fill="#ecb22e"/><rect x="24" y="39" width="10" height="24" rx="5" fill="#e01e5a"/><rect x="10" y="39" width="10" height="10" rx="5" fill="#e01e5a"/><circle cx="66" cy="9" r="16.500" fill="#fb3b35"/><circle cx="66" cy="9" r="1.800" fill="#fff"/></svg><i class="dot"></i></div>
  <i class="dock-sep"></i>
  <div class="cell"><svg class="di" viewBox="0 0 72 72"><path d="M16 -6h20l10 23H16z" fill="#eee"/><path d="M36 -6v23" stroke="#888" stroke-width="3"/><path d="M0 18c0-2 1-4 3-4h20c2 0 3 3 5 3h41c2 0 4 2 4 4v51H0z" fill="#2ba3e0"/><rect y="24" width="74" height="42" rx="3" fill="#55c9fa"/></svg></div>
  <div class="cell"><svg class="di" viewBox="0 0 72 72"><defs><linearGradient id="tr" x1="0" y1="0" x2="1" y2="0"><stop offset="0" stop-color="#5a5c5e"/><stop offset=".5" stop-color="#8a8c8e"/><stop offset="1" stop-color="#56585a"/></linearGradient></defs><path d="M5 4h62l-4 68c-1 3-8 4-27 4s-26-1-27-4z" fill="url(#tr)"/><path d="M5 5 15 -6l7 6 9-7 8 7 10-6 7 6 11 5-9 8H14z" fill="#dcdcdc"/><path d="M20 3l6 8M33 -2l3 13M44 1l-4 10M52 0l-2 11" stroke="#555" stroke-width="2"/></svg></div>
</div>
</footer>
</body>
</html>
```
FILE: styles.css
```css
html, body { margin: 0; padding: 0; }
.screen {
  width: 2880px; height: 1800px; overflow: hidden;
  display: flex; flex-direction: column;
  font-family: "Inter", "Liberation Sans", sans-serif;
  background:
    linear-gradient(to right, #1f4a74 0, #1b2f60 50%, #1b1c50 100%) top / 100% 90px no-repeat,
    #2e000d;
}

/* menu bar */
.menubar {
  height: 49px; flex: none;
  display: flex; justify-content: space-between; align-items: center;
  padding: 0 39px 0 43px; color: #f4f5f8;
  font-size: 26px; letter-spacing: -.3px;
}
.menu-left { display: flex; align-items: center; gap: 41px; }
.apple { width: 26px; height: 31px; margin-right: 4px; margin-top: -6px; }
.menu-app { font-weight: 700; font-size: 27px; }
.menu-right { display: flex; align-items: center; }
.st { display: block; flex: none; }
.st-zoom { width: 32px; height: 32px; }
.st-next { width: 30px; height: 24px; margin-left: 35px; }
.st-batt { width: 52px; height: 24px; margin-left: 37px; }
.st-wifi { width: 32px; height: 24px; margin-left: 36px; }
.st-search { width: 24px; height: 24px; margin-left: 40px; }
.st-ctrl { width: 28px; height: 26px; margin-left: 39px; }
.st-siri { width: 28px; height: 28px; margin-left: 33px; }
.clock { margin-left: 33px; }

/* window */
.window {
  height: 1619px; flex: none;
  display: flex; flex-direction: column;
  border-radius: 20px; overflow: hidden;
  border-bottom: 2px solid #000;
}
.tabstrip {
  height: 85px; flex: none; box-sizing: border-box;
  background: #202124; border-top: 2px solid #6a6b6d;
  border-radius: 20px 20px 0 0;
  display: flex; align-items: flex-end; padding-left: 42px;
}
.lights { display: flex; gap: 16px; align-self: flex-start; margin-top: 30px; }
.light { display: block; width: 24px; height: 24px; border-radius: 50%; }
.red { background: #ff5f57; }
.yellow { background: #febc2e; }
.green { background: #28c840; }
.tab {
  width: 480px; height: 68px; margin-left: 40px; box-sizing: border-box;
  background: #35363a; border-radius: 16px 16px 0 0;
  display: flex; align-items: center; padding: 0 24px 0 26px;
  color: #f1f3f4; font-size: 23.5px;
}
.tab-globe { width: 28px; height: 28px; flex: none; }
.tab-title { margin-left: 19px; flex: 1; }
.tab-close { width: 17px; height: 17px; flex: none; }
.new-tab { width: 24px; height: 24px; margin: 0 0 22px 32px; }
.strip-spacer { flex: 1; }
.tab-search {
  width: 28px; height: 28px; border-radius: 50%; background: #bdc1c6;
  margin: 0 30px 20px 0; display: flex; align-items: center; justify-content: center;
}
.tab-search svg { width: 12px; height: 12px; }

.toolbar {
  height: 74px; flex: none; box-sizing: border-box;
  background: #35363a; display: flex; align-items: center;
  padding: 0 0 2px 31px;
}
.nav { width: 26px; height: 26px; flex: none; }
.nav-fwd { margin-left: 38px; }
.nav-reload { margin-left: 38px; }
.omnibox {
  width: 2327px; height: 56px; margin-left: 30px; flex: none; box-sizing: border-box;
  background: #202124; border-radius: 28px;
  display: flex; align-items: center; padding: 0 20px 0 23px;
}
.info { width: 27px; height: 27px; flex: none; }
.omni-file { color: #9aa0a6; font-size: 27px; margin-left: 19px; }
.omni-sep { width: 2px; height: 32px; background: #7b7e82; margin-left: 17px; }
.omni-url { color: #f1f3f4; font-size: 28px; margin-left: 18px; flex: 1; white-space: nowrap; }
.star { width: 29px; height: 28px; flex: none; }
.puzzle { width: 29px; height: 29px; margin-left: 31px; flex: none; }
.profile {
  width: 175px; height: 56px; margin-left: 21px; box-sizing: border-box; flex: none;
  border: 2px solid #8ab4f8; border-radius: 28px; background: #2f3540;
  display: flex; align-items: center; padding-left: 5px;
}
.avatar {
  width: 43px; height: 43px; border-radius: 50%; background: #4e2aa5; color: #fff;
  display: flex; align-items: center; justify-content: center; font-size: 23px;
}
.paused { color: #8ab4f8; font-size: 25px; margin-left: 18px; }
.kebab { display: flex; flex-direction: column; gap: 6px; margin-left: 34px; }
.kebab i { display: block; width: 6px; height: 6px; border-radius: 50%; background: #e8eaed; }

.bookmarks {
  height: 64px; flex: none; box-sizing: border-box;
  background: #35363a; border-bottom: 2px solid #5e5f62;
  display: flex; align-items: center; padding: 0 29px 9px 31px; gap: 34px;
  color: #f1f3f4; font-size: 24px; letter-spacing: -.1px;
}
.bm { display: flex; align-items: center; gap: 15px; }
.bm-ic { width: 32px; height: 30px; flex: none; }
.bm-apps .bm-ic { width: 26px; height: 27px; margin-right: 5px; }
.bm-tight .bm-ic { width: 31px; }
.bm-narrow .bm-ic { width: 30px; }
.bm-pin { height: 33px; }
.bm-spacer { flex: 1; }
.bm-sep { width: 2px; height: 32px; background: #5f6368; margin-right: -11px; }
.read-ic { width: 27px; height: 28px; flex: none; }
.bm-read { gap: 19px; }
.tr-g { font: 700 12px "Liberation Sans", sans-serif; fill: #fff; }

/* page */
.page {
  flex: 1; min-height: 0; background: #fff; position: relative;
  border-radius: 0 0 20px 20px; overflow: hidden;
  font-family: "DejaVu Sans", Verdana, sans-serif; color: #000;
}
.page::after {
  content: ""; position: absolute; left: 0; right: 0; bottom: 0; height: 62px;
  background: linear-gradient(to bottom, rgba(0,0,0,0), rgba(0,0,0,.14));
  -webkit-mask-image: linear-gradient(to right, transparent 0, #000 130px, #000 2750px, transparent 100%);
  mask-image: linear-gradient(to right, transparent 0, #000 130px, #000 2750px, transparent 100%);
}
.topline {
  display: flex; justify-content: space-between;
  padding: 19px 16px 0; font-size: 32px; line-height: 37px;
}
.scores { color: #551a8b; }
.timer { letter-spacing: .55px; }
.quiz { margin: 117px 0 0 839px; }
.question { margin: 0; font-size: 32px; line-height: 38px; font-weight: 700; }
.answers { display: flex; flex-direction: column; align-items: flex-start; gap: 20px; margin: 37px 0 0 11px; }
.answer {
  height: 80px; box-sizing: border-box; padding: 0 12px 2px; margin: 0;
  background: #008b8b; color: #fff; font: 26.67px "Liberation Sans", Arial, sans-serif;
  border-width: 4px; border-style: solid;
  border-color: #767676 #1f1f1f #1f1f1f #767676;
}

/* dock */
.dock-row { flex: 1; min-height: 0; display: flex; padding-left: 81px; }
.dock {
  width: 2718px; height: 119px; box-sizing: border-box; margin-top: 2px;
  background: #431522; border: 2px solid #5e3040; border-radius: 30px;
  display: flex; align-items: flex-start; gap: 25.05px; padding: 17px 0 0 16px;
}
.cell { width: 72px; height: 72px; flex: none; position: relative; }
.di { display: block; width: 72px; height: 72px; overflow: visible; }
.dot {
  position: absolute; left: 32px; top: 90px; width: 7px; height: 7px; border-radius: 50%;
  background: #c48ea2;
}
.dock-sep { display: block; width: 2px; height: 88px; flex: none; margin: -3px 9px 0; background: #8a5a6a; }
.cal-mon { font: 700 15px "Liberation Sans", sans-serif; fill: #fff; text-anchor: middle; }
.cal-day { font: 42px "Liberation Sans", sans-serif; fill: #222; text-anchor: middle; }
.badge-num { font: 700 17px "Liberation Sans", sans-serif; fill: #fff; text-anchor: middle; }
.tv-txt { font: 700 30px "Liberation Sans", sans-serif; fill: #fff; }
.mp-280 { font: 700 10px "Liberation Sans", sans-serif; fill: #fff; text-anchor: middle; }
```
